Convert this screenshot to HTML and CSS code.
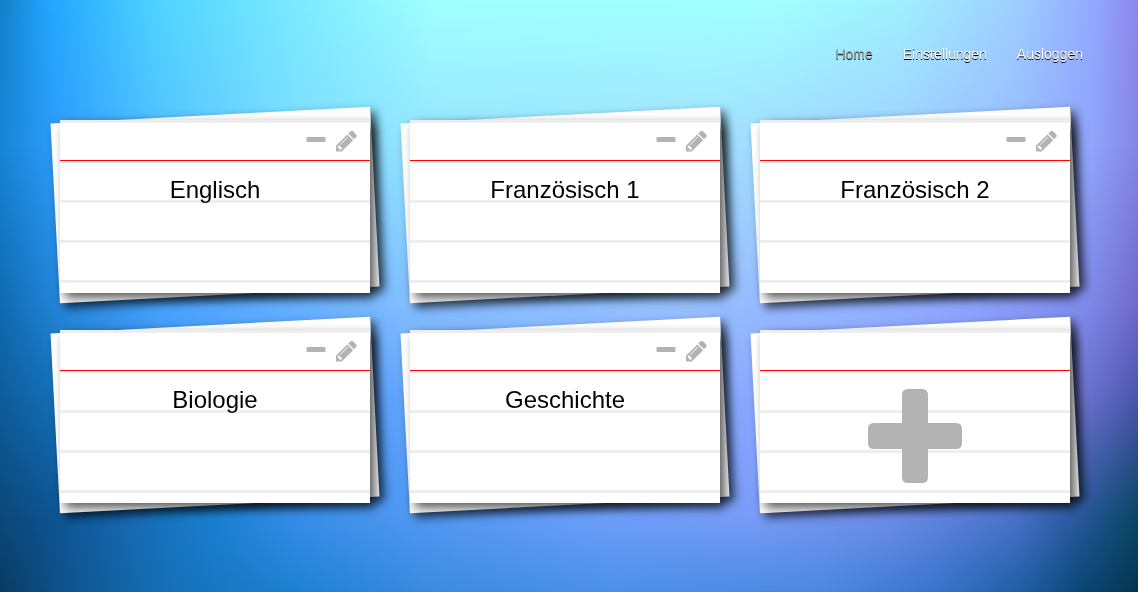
FILE: index.html
```html
<!DOCTYPE html>
<html lang="de">
<head>
<meta charset="utf-8">
<meta name="viewport" content="width=device-width, initial-scale=1">
<title>Karteikarten</title>
<link rel="stylesheet" href="styles.css">
</head>
<body>
<div class="backdrop" aria-hidden="true">
  <div class="band band-1"></div>
  <div class="band band-2"></div>
  <div class="band band-3"></div>
  <div class="band band-4"></div>
  <div class="band band-5"></div>
  <div class="band band-6"></div>
</div>
<svg class="symbols" aria-hidden="true">
  <symbol id="minus" viewBox="0 0 20 22"><rect x="0.5" y="7" width="19" height="5" rx="1" /></symbol>
  <symbol id="pencil" viewBox="128 128 1536 1536">
    <path d="M491 1536l91-91-235-235-91 91v107h128v128h107zm523-928q0-22-22-22-10 0-17 7l-542 542q-7 7-7 17 0 22 22 22 10 0 17-7l542-542q7-7 7-17zm-54-192l416 416-832 832h-416v-416zm683 96q0 53-37 90l-166 166-416-416 166-165q36-38 90-38 53 0 91 38l235 234q37 39 37 91z"/>
  </symbol>
  <symbol id="plus" viewBox="0 0 94 94"><path d="M40 0H54Q60 0 60 6V34H88Q94 34 94 40V54Q94 60 88 60H60V88Q60 94 54 94H40Q34 94 34 88V60H6Q0 60 0 54V40Q0 34 6 34H34V6Q34 0 40 0Z"/></symbol>
</svg>
<header>
  <nav class="nav">
    <a class="nav-link current" href="#home">Home</a>
    <a class="nav-link" href="#einstellungen">Einstellungen</a>
    <a class="nav-link" href="#ausloggen">Ausloggen</a>
  </nav>
</header>
<main class="cards">
  <article class="card">
    <div class="tools">
      <button class="tool" type="button" aria-label="Englisch entfernen"><svg class="icon-minus"><use href="#minus"/></svg></button>
      <button class="tool" type="button" aria-label="Englisch bearbeiten"><svg class="icon-pencil"><use href="#pencil"/></svg></button>
    </div>
    <h2 class="title">Englisch</h2>
  </article>
  <article class="card">
    <div class="tools">
      <button class="tool" type="button" aria-label="Französisch 1 entfernen"><svg class="icon-minus"><use href="#minus"/></svg></button>
      <button class="tool" type="button" aria-label="Französisch 1 bearbeiten"><svg class="icon-pencil"><use href="#pencil"/></svg></button>
    </div>
    <h2 class="title">Französisch 1</h2>
  </article>
  <article class="card">
    <div class="tools">
      <button class="tool" type="button" aria-label="Französisch 2 entfernen"><svg class="icon-minus"><use href="#minus"/></svg></button>
      <button class="tool" type="button" aria-label="Französisch 2 bearbeiten"><svg class="icon-pencil"><use href="#pencil"/></svg></button>
    </div>
    <h2 class="title">Französisch 2</h2>
  </article>
  <article class="card">
    <div class="tools">
      <button class="tool" type="button" aria-label="Biologie entfernen"><svg class="icon-minus"><use href="#minus"/></svg></button>
      <button class="tool" type="button" aria-label="Biologie bearbeiten"><svg class="icon-pencil"><use href="#pencil"/></svg></button>
    </div>
    <h2 class="title">Biologie</h2>
  </article>
  <article class="card">
    <div class="tools">
      <button class="tool" type="button" aria-label="Geschichte entfernen"><svg class="icon-minus"><use href="#minus"/></svg></button>
      <button class="tool" type="button" aria-label="Geschichte bearbeiten"><svg class="icon-pencil"><use href="#pencil"/></svg></button>
    </div>
    <h2 class="title">Geschichte</h2>
  </article>
  <article class="card">
    <div class="tools"></div>
    <button class="add" type="button" aria-label="Neuer Stapel"><svg class="icon-plus"><use href="#plus"/></svg></button>
  </article>
</main>
</body>
</html>
```
FILE: styles.css
```css
* { box-sizing: border-box; }

body {
  margin: 0;
  min-height: 100vh;
  padding: 44px 50px 0 60px;
  font-family: "Liberation Sans", Arial, sans-serif;
  color: #000;
}

/* Colour field: horizontal gradients that fade into each other downwards. */
.backdrop {
  position: fixed;
  inset: 0;
  z-index: -2;
}
.band {
  position: absolute;
  inset: 0;
}
.band-1 {
  background: linear-gradient(to right, #1480c8 0%, #20a4fc 4%, #34b8ff 8%, #50d4ff 14%, #7ceaff 26%, #a0ffff 38%, #a2ffff 68%, #a0f0ff 79%, #a0d0ff 89%, #92aaff 96%, #8f86ec 100%);
}
.band-2 {
  background: linear-gradient(to right, #1784d4 0%, #2f9cfb 5%, #54c0ff 14%, #7cdcff 26%, #98e4ff 39%, #a2e0ff 62%, #9fcfff 79%, #97b8ff 90%, #90a4fa 96%, #8684e4 100%);
  mask-image: linear-gradient(to bottom, transparent 0%, #000 25%);
}
.band-3 {
  background: linear-gradient(to right, #1069ae 0%, #2284d8 5%, #4aa2ff 14%, #66b0ff 26%, #82bcff 36%, #97c0ff 60%, #94b2ff 76%, #8ca2fc 86%, #808cec 95%, #7068c8 100%);
  mask-image: linear-gradient(to bottom, transparent 25%, #000 52%);
}
.band-4 {
  background: linear-gradient(to right, #0f5c9a 0%, #1470b8 5%, #2688dc 14%, #4498f8 26%, #64a4fc 36%, #86b0ff 56%, #8aa4ff 70%, #8496f0 84%, #6e74d0 95%, #4c54ac 100%);
  mask-image: linear-gradient(to bottom, transparent 52%, #000 67%);
}
.band-5 {
  background: linear-gradient(to right, #0c4878 0%, #0e5494 5%, #176cb4 12%, #1b80d2 19%, #378eea 26%, #5098f2 36%, #6c9ffa 52%, #7a9cf8 66%, #6e8ee8 78%, #4c74cc 89%, #28589c 95%, #0a4662 100%);
  mask-image: linear-gradient(to bottom, transparent 67%, #000 87%);
}
.band-6 {
  background: linear-gradient(to right, #0a3a62 0%, #105088 5%, #1670b8 15%, #1e80d0 26%, #3c8ae0 38%, #4c90e8 54%, #4c88e0 72%, #3a74cc 82%, #1e5ca0 90%, #0a4674 95%, #053550 100%);
  mask-image: linear-gradient(to bottom, transparent 87%, #000 100%);
}

.symbols {
  position: absolute;
  width: 0;
  height: 0;
}

.nav {
  display: flex;
  justify-content: flex-end;
  gap: 30px;
  padding-right: 5px;
  font-size: 14px;
  line-height: 20px;
}
.nav-link {
  color: #fff;
  text-decoration: none;
  text-shadow: 0 1px 0 #000;
}
.nav-link.current { color: #aaa; }

.cards {
  display: grid;
  grid-template-columns: repeat(auto-fill, 310px);
  gap: 37px 40px;
  padding: 56px 0 80px;
}
.card {
  position: relative;
  min-height: 173px;
  background:
    linear-gradient(#f00, #f00) 0 40px / 100% 1px no-repeat,
    repeating-linear-gradient(#eee 0 3px, #fff 3px 40px);
  box-shadow: 5px 5px 10px rgba(0, 0, 0, .65);
}
/* The tilted sheet lying under each card. */
.card::before {
  content: "";
  position: absolute;
  inset: -5px -5px -2px;
  z-index: -1;
  background: #fff;
  box-shadow: 5px 5px 10px rgba(0, 0, 0, .65);
  transform: rotate(-3deg);
}
.tools {
  display: flex;
  justify-content: flex-end;
  gap: 10px;
  height: 40px;
  padding: 10px 13px 0 0;
}
button {
  border: 0;
  padding: 0;
  background: none;
  color: #b3b3b3;
  cursor: pointer;
}
.tool { height: 22px; }
svg {
  display: block;
  fill: currentColor;
}
.icon-minus {
  width: 20px;
  height: 22px;
}
.icon-pencil {
  width: 21px;
  height: 22px;
}
.title {
  margin: 16px 0 0;
  font-size: 24px;
  font-weight: 400;
  line-height: 28px;
  text-align: center;
}
.add {
  display: block;
  margin: 19px auto 0;
}
.icon-plus {
  width: 94px;
  height: 94px;
}
```
